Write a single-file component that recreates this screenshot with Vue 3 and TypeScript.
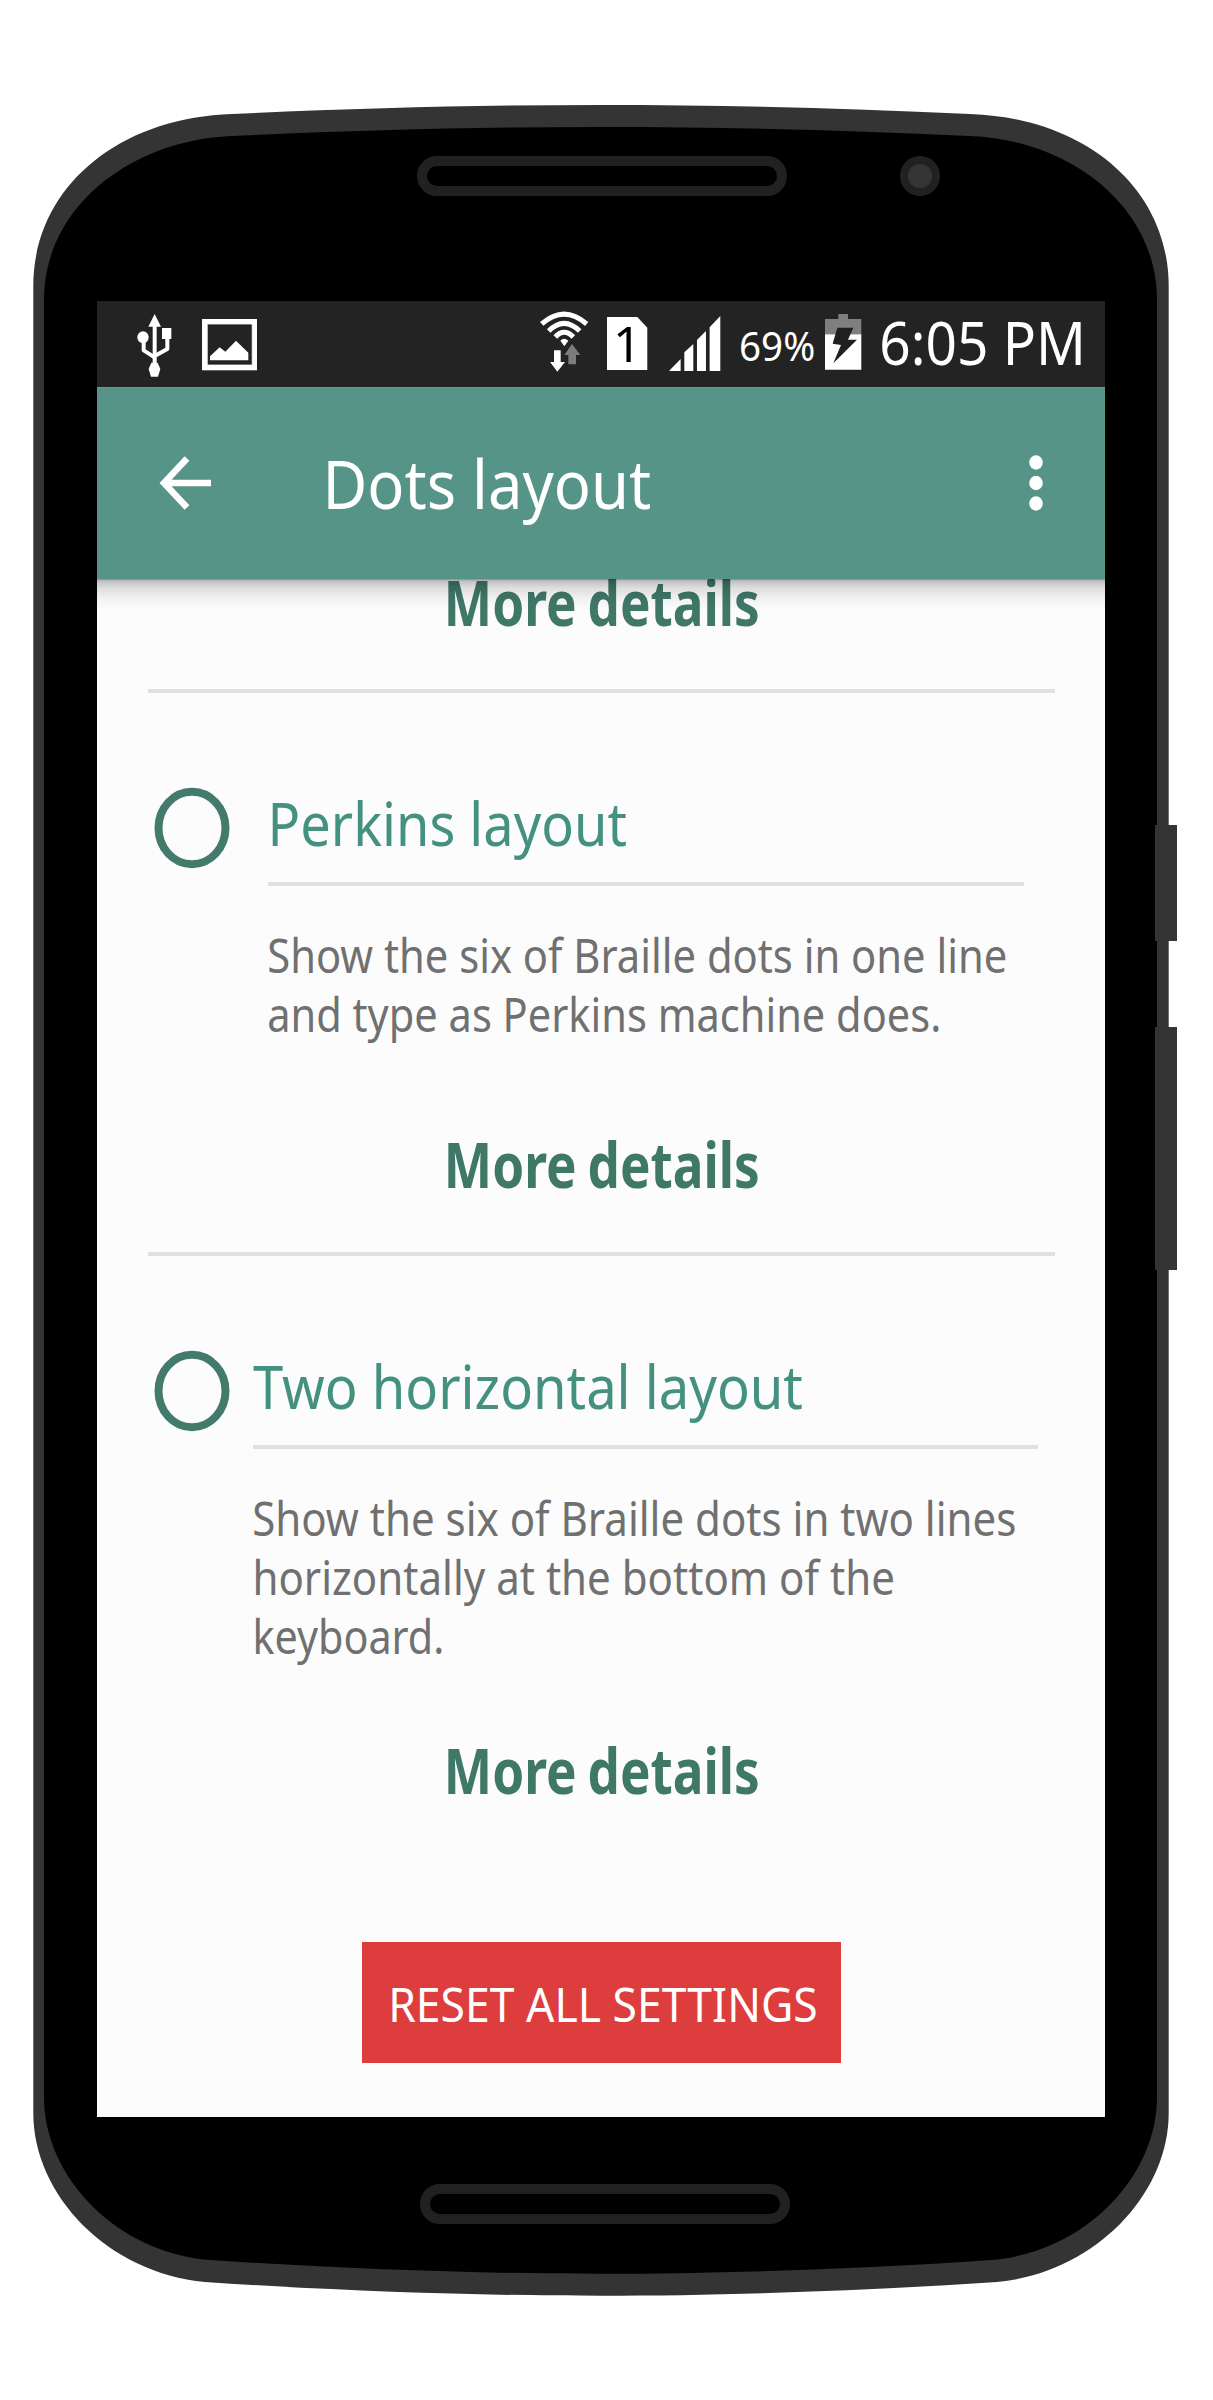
<script setup lang="ts">
import type { Directive } from 'vue'

interface Line {
  text: string
  width: number
  indented?: boolean
}

interface LayoutOption {
  id: string
  title: Line
  description: Line[]
}

const options: LayoutOption[] = [
  {
    id: 'perkins',
    title: { text: 'Perkins layout', width: 354 },
    description: [
      { text: 'Show the six of Braille dots in one line', width: 737 },
      { text: 'and type as Perkins machine does.', width: 670 },
    ],
  },
  {
    id: 'horizontal',
    title: { text: 'Two horizontal layout', width: 549 },
    description: [
      { text: 'Show the six of Braille dots in two lines', width: 761 },
      { text: 'horizontally at the bottom of the', width: 637.5, indented: true },
      { text: 'keyboard.', width: 186, indented: true },
    ],
  },
]

// Condenses a line of text so that its visible glyphs span exactly the given width.
const vSpan: Directive<HTMLElement, number> = {
  mounted(el, binding) {
    const style = getComputedStyle(el)
    const ctx = document.createElement('canvas').getContext('2d')
    if (!ctx) return
    ctx.font = `${style.fontWeight} ${style.fontSize} ${style.fontFamily}`
    ctx.wordSpacing = style.wordSpacing
    const m = ctx.measureText(el.textContent ?? '')
    const scale = binding.value / (m.actualBoundingBoxLeft + m.actualBoundingBoxRight)
    const shift = m.actualBoundingBoxLeft * scale
    el.style.transform = `translateX(${shift}px) scaleX(${scale})`
  },
}
</script>

<template>
  <div class="stage">
    <svg class="body" viewBox="0 0 1213 2400" aria-hidden="true">
      <g fill="#343434">
        <path
          d="M33.3 286C33.3 190 115 118 232 114C360 108 480 105 601 105C722 105 842 108 970 114C1087 118 1168.7 190 1168.7 286V2113C1168.7 2195 1094 2273 997 2282C862 2291 722 2295.7 601 2295.7C480 2295.7 340 2291 205 2282C108 2273 33.3 2195 33.3 2113Z"
        />
        <path
          d="M44 300C44 208 130 140 232 136C360 130 480 127 601 127C722 127 842 130 970 136C1072 140 1157 208 1157 300V2097C1157 2178 1083 2253 991 2260C862 2269 722 2273.7 601 2273.7C480 2273.7 340 2269 210 2260C118 2253 44 2178 44 2097Z"
          fill="#000"
        />
        <rect x="1155" y="825" width="22" height="116" />
        <rect x="1155" y="1027" width="22" height="243" />
      </g>
      <g fill="none" stroke="#212121" stroke-width="10">
        <rect x="422" y="161" width="360" height="30" rx="15" />
        <rect x="425" y="2189" width="360" height="30" rx="15" />
      </g>
      <circle cx="920" cy="176" r="20" fill="#212121" />
      <circle cx="920" cy="176" r="12" fill="#353535" />
    </svg>

    <main class="screen">
      <div class="status">
        <svg class="usb" viewBox="138 72 108 192" fill="#fff">
          <path d="M194 72L213 110H175Z" />
          <ellipse cx="159" cy="142" rx="17" ry="18" />
          <path d="M216 114H244V147H216Z" />
          <path d="M184 218H203L211 237L204 260H183L176 237Z" />
          <g fill="none" stroke="#fff" stroke-width="12" stroke-linejoin="round">
            <path d="M194 100V225" />
            <path d="M161 142V181L194 202" />
            <path d="M232 146V177L194 198" />
          </g>
        </svg>
        <svg class="picture" viewBox="336 86 165 154">
          <rect x="344.5" y="94.5" width="148" height="137" fill="#232323" stroke="#fff" stroke-width="17" />
          <path d="M353 104H485V223" fill="none" stroke="#111" stroke-width="2" />
          <path d="M360 210V198L389 171L406 184L438 151L475 187V210Z" fill="#fff" />
        </svg>
        <svg class="wifi" viewBox="28 64 152 184">
          <g fill="none" stroke="#fff" stroke-width="15">
            <path d="M36 103Q103 44 171 103" />
            <path d="M57 124Q103 78 150 124" />
            <path d="M77 142Q103 114 131 142" />
          </g>
          <path d="M92 153Q103 141 116 153L104 170Z" fill="#fff" />
          <path d="M73 182H93V217H106L83 246L61 217H73Z" fill="#fff" />
          <path d="M127 163L152 196H139V224H116V196H104Z" fill="#7c7c7c" />
        </svg>
        <svg class="sim" viewBox="231 80 121 159">
          <path d="M231 80H322L352 112V239H231Z" fill="#fff" />
          <text x="249" y="216" font-size="150">1</text>
        </svg>
        <svg class="signal" viewBox="418 78 154 165" fill="#fff">
          <path
            d="M418 243L453 207V243ZM464 187L491 162V243H464ZM502 150L529 123V243H502ZM540 112L572 78V243H540Z"
          />
        </svg>
        <div class="percent"><span v-span="73" class="glyphs">69%</span></div>
        <svg class="battery" viewBox="46 72 109 167">
          <path d="M86 72H115V87H155V133H46V87H86Z" fill="#7f7f7f" />
          <path d="M46 133H155V239H46Z" fill="#fff" />
          <path d="M83 113H131L115 149H142L71 220L94 165L69 161Z" fill="#202020" />
        </svg>
        <div class="clock"><span v-span="199" class="glyphs">6:05 PM</span></div>
      </div>

      <header class="appbar">
        <svg class="back" viewBox="0 0 52 54" fill="none" stroke="#fff" stroke-width="6.5">
          <path d="M51 27H5M27 2.500L4 27L27 51.500" />
        </svg>
        <h1><span v-span="322" class="glyphs">Dots layout</span></h1>
        <svg class="menu" viewBox="0 0 14 56" fill="#fff">
          <ellipse cx="7" cy="7.500" rx="6.800" ry="7.200" />
          <ellipse cx="7" cy="28" rx="6.800" ry="7.200" />
          <ellipse cx="7" cy="48.500" rx="6.800" ry="7.200" />
        </svg>
      </header>

      <section class="content">
        <div class="more first"><span v-span="310" class="glyphs">More details</span></div>
        <template v-for="option in options" :key="option.id">
          <div class="divider"></div>
          <article class="option" :class="option.id">
            <svg class="radio" viewBox="0 0 76 82">
              <ellipse cx="38" cy="41" rx="33.500" ry="36.200" fill="none" stroke="#427a6b" stroke-width="8" />
            </svg>
            <div class="details">
              <h2><span v-span="option.title.width" class="glyphs">{{ option.title.text }}</span></h2>
              <div class="rule"></div>
              <p v-for="line in option.description" :key="line.text" :class="{ indented: line.indented }">
                <span v-span="line.width" class="glyphs">{{ line.text }}</span>
              </p>
            </div>
          </article>
          <div class="more" :class="option.id"><span v-span="310" class="glyphs">More details</span></div>
        </template>
        <button class="reset" type="button"><span v-span="424" class="glyphs">RESET ALL SETTINGS</span></button>
      </section>
    </main>
  </div>
</template>

<style>
body {
  background: #fff;
}
</style>

<style scoped>
.stage {
  display: grid;
  width: 1213px;
  height: 2400px;
  overflow: hidden;
  font-family: "Noto Sans", "Open Sans", sans-serif;
}

.body,
.screen {
  grid-area: 1 / 1;
}

.body {
  width: 1213px;
  height: 2400px;
}

.screen {
  z-index: 1;
  display: flex;
  flex-direction: column;
  width: 1008px;
  height: 1816px;
  margin: 301px 0 0 97px;
  overflow: hidden;
  background: #fcfcfc;
}

svg {
  display: block;
  flex: none;
  overflow: visible;
}

.glyphs {
  display: inline-block;
  white-space: nowrap;
  transform-origin: 0 0;
}

.status {
  display: flex;
  flex: none;
  align-items: flex-start;
  height: 86px;
  background: #232323;
  color: #fff;
}

.usb {
  width: 36px;
  height: 64px;
  margin: 13px 0 0 39px;
}

.picture {
  width: 55px;
  height: 51.3px;
  margin: 17.7px 0 0 30px;
}

.wifi {
  width: 50.7px;
  height: 61.3px;
  margin: 10.3px 0 0 282.3px;
}

.sim {
  width: 40.3px;
  height: 53px;
  margin: 15.7px 0 0 16.7px;
}

.signal {
  width: 51.3px;
  height: 55px;
  margin: 15px 0 0 22px;
}

.percent {
  width: 73px;
  margin: 25px 0 0 20.3px;
  font-size: 40px;
  line-height: 40px;
}

.battery {
  width: 36.3px;
  height: 55.7px;
  margin: 13px 0 0 11.4px;
}

.clock {
  width: 199px;
  margin: 10.5px 0 0 21px;
  font-size: 60px;
  line-height: 60px;
}

.appbar {
  display: flex;
  flex: none;
  align-items: flex-start;
  height: 192px;
  background: #559486;
  border-top: 1px solid #5ca08f;
  box-sizing: border-box;
  color: #fff;
}

.back {
  width: 52px;
  height: 54px;
  margin: 67.5px 0 0 63px;
}

h1 {
  width: 322px;
  margin: 65px 0 0 115.5px;
  font-size: 67px;
  font-weight: 400;
  line-height: 60px;
}

.menu {
  width: 14px;
  height: 56px;
  margin: 66.5px 0 0 379px;
}

.content {
  position: relative;
  flex: 1;
  overflow: hidden;
}

.content::before {
  content: "";
  position: absolute;
  z-index: 1;
  inset: 0 0 auto;
  height: 32px;
  background: linear-gradient(
    rgba(0, 0, 0, 0.45) 0,
    rgba(0, 0, 0, 0.23) 2px,
    rgba(0, 0, 0, 0.12) 9px,
    rgba(0, 0, 0, 0.04) 20px,
    transparent
  );
}

.more {
  width: 310px;
  height: 60px;
  margin-left: 350.5px;
  color: #407868;
  font-size: 62px;
  font-weight: 700;
  line-height: 60px;
  word-spacing: -3px;
}

.more.first {
  margin-top: -7px;
  margin-bottom: 57px;
}

.more.perkins {
  margin-top: 91px;
  margin-bottom: 58px;
}

.more.horizontal {
  margin-top: 75px;
}

.divider {
  height: 4px;
  margin: 0 50.5px;
  background: #e0e0e0;
}

.option {
  display: flex;
  align-items: flex-start;
  padding: 100px 0 0 57px;
}

.radio {
  width: 76px;
  height: 82px;
  margin-top: -6.5px;
}

.details {
  width: 756px;
  margin-left: 37.5px;
}

.horizontal .details {
  width: 785px;
  margin-left: 22.5px;
}

h2 {
  height: 60px;
  margin: 0 0 29px 4px;
  color: #459180;
  font-size: 61px;
  font-weight: 400;
  line-height: 60px;
}

.horizontal h2 {
  margin-left: 0.5px;
}

.rule {
  height: 4px;
  margin-bottom: 40px;
  background: #e0e0e0;
}

p {
  height: 59px;
  margin: 0 0 0 1.5px;
  color: #707070;
  font-size: 47px;
  line-height: 59px;
}

p.indented {
  margin-left: 3px;
}

p:last-child {
  height: 58px;
}

.reset {
  display: block;
  width: 478.5px;
  height: 121px;
  margin: 142px 0 0 265px;
  padding: 3px 0 0 29.5px;
  border: 0;
  background: #dd3d3d;
  color: #fff;
  font-family: inherit;
  font-size: 47px;
  line-height: 118px;
  text-align: left;
}
</style>
